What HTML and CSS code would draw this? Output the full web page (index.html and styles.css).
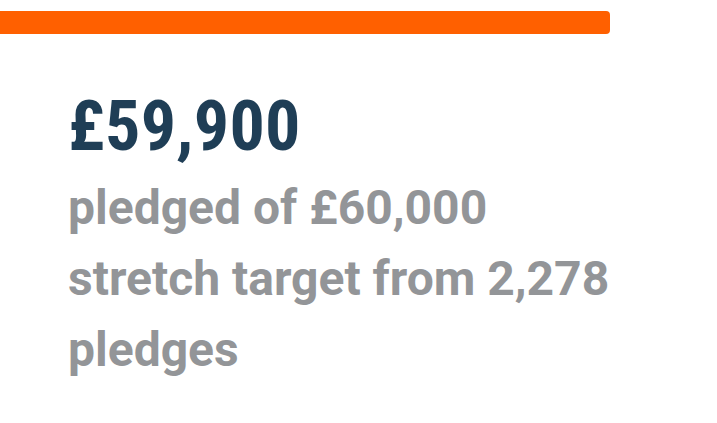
FILE: index.html
```html
<!DOCTYPE html>
<html lang="en">
<head>
    <meta charset="UTF-8">
    <meta name="viewport" content="width=device-width, initial-scale=1.0">
    <title>Pledges</title>
    <link rel="stylesheet" href="styles.css">
</head>
<body>

<div class="progress">
    <div class="progress-fill"></div>
</div>

<div class="stats">
    <div class="amount">£59,900</div>
    <div class="caption">pledged of £60,000 stretch target from 2,278 pledges</div>
</div>

</body>
</html>
```

FILE: styles.css
```css
body {
    margin: 0;
    font-family: Roboto, "Liberation Sans", sans-serif;
    background-color: white;
}

.progress {
    width: 610px;
    padding-top: 11px;
}

.progress-fill {
    height: 23px;
    background-color: #ff6000;
    border-radius: 0 4px 4px 0;
}

.stats {
    padding: 57px 0 0 68px;
    width: 560px;
}

.amount {
    font-size: 70px;
    line-height: 70px;
    font-weight: 700;
    font-stretch: 80%;
    letter-spacing: 0.3px;
    color: #1f3e56;
}

.caption {
    margin-top: 11px;
    font-size: 48px;
    line-height: 71px;
    font-weight: 700;
    color: #939598;
}
```
